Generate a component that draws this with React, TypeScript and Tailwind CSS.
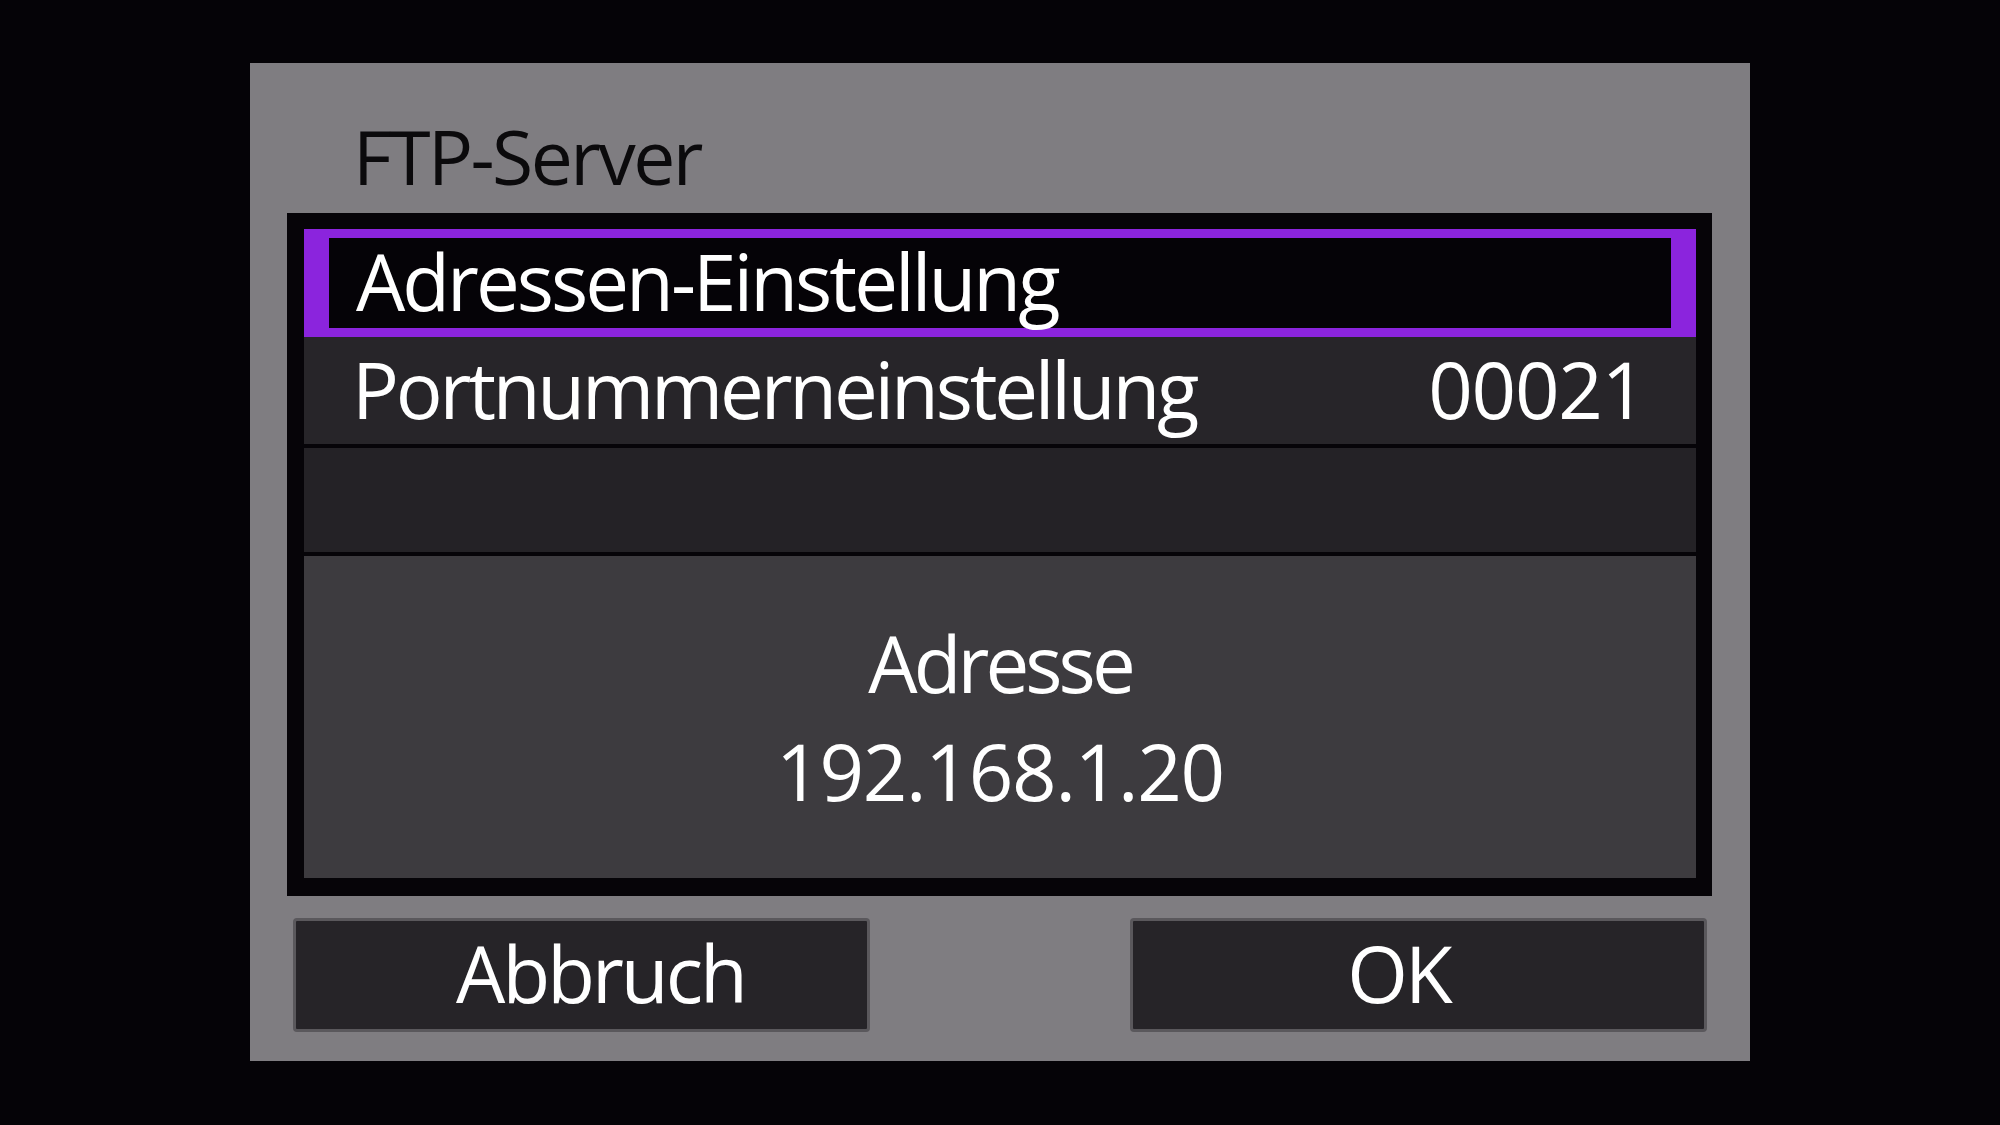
const font = { fontFamily: '"Open Sans", "Noto Sans", sans-serif' };

const Row = ({ label, value, selected }: { label: string; value?: string; selected?: boolean }) => {
  if (selected) {
    return (
      <div className="h-[108px] border-x-[25px] border-y-[9px] border-[#8b24dd] bg-[#050307] flex items-center pl-[27px]">
        <span className="text-[78px] leading-none text-white tracking-[-0.038em] -mt-[4px]">{label}</span>
      </div>
    );
  }
  return (
    <div className="h-[107px] bg-[#272529] flex items-center justify-between pl-[48px] pr-[51px]">
      <span className="text-[78px] leading-none text-white tracking-[-0.041em] -mt-[4px]">{label}</span>
      {value && <span className="text-[78px] leading-none text-white tracking-[-0.016em] -mt-[4px]">{value}</span>}
    </div>
  );
};

const Button = ({ label, shift }: { label: string; shift: string }) => (
  <div className={`w-[577px] h-[114px] rounded-[4px] border-[3px] border-[#5a585c] bg-[#262428] flex items-center justify-center ${shift}`}>
    <span className="text-[78px] leading-none text-white tracking-[-0.038em] -mt-[4px]">{label}</span>
  </div>
);

export default function App() {
  return (
    <div className="w-[2000px] h-[1125px] bg-[#050307] pt-[63px] pl-[250px]" style={font}>
      <div className="w-[1500px] h-[998px] bg-[#7f7d81] flex flex-col">
        <div className="h-[150px] pt-[56px] pl-[103px]">
          <span className="text-[75px] leading-none text-[#0b0a0c] tracking-[-0.034em]">FTP-Server</span>
        </div>
        <div className="ml-[37px] w-[1425px] h-[683px] bg-[#060408] pt-[16px] pl-[17px] pr-[16px] pb-[18px] flex flex-col">
          <Row label="Adressen-Einstellung" selected />
          <Row label="Portnummerneinstellung" value="00021" />
          <div className="mt-[4px] h-[104px] bg-[#242226]" />
          <div className="mt-[4px] flex-1 bg-[#3d3b3f] flex flex-col items-center justify-center">
            <span className="text-[78px] leading-[108px] text-white tracking-[-0.05em]">Adresse</span>
            <span className="text-[78px] leading-[108px] text-white tracking-[-0.016em]">192.168.1.20</span>
          </div>
        </div>
        <div className="mt-[22px] px-[43px] flex justify-between">
          <Button label="Abbruch" shift="pl-[38px]" />
          <Button label="OK" shift="pr-[40px]" />
        </div>
      </div>
    </div>
  );
}
